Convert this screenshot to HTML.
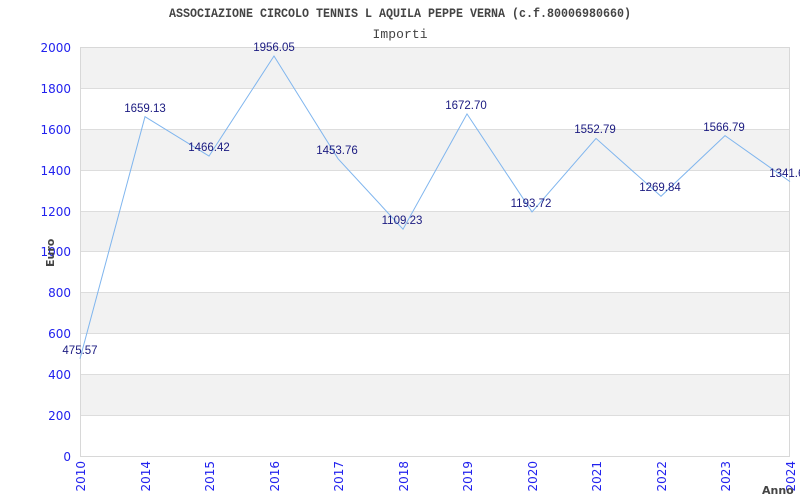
<!DOCTYPE html>
<html><head><meta charset="utf-8"><style>
html,body{margin:0;padding:0;background:#fff;width:800px;height:500px;overflow:hidden}
svg{display:block}
</style></head><body>
<svg width="800" height="500" xmlns="http://www.w3.org/2000/svg">
<rect x="0" y="0" width="800" height="500" fill="#fff"/>
<g fill="#f2f2f2">
<rect x="80" y="47" width="710" height="41"/>
<rect x="80" y="129" width="710" height="41"/>
<rect x="80" y="211" width="710" height="41"/>
<rect x="80" y="292" width="710" height="41"/>
<rect x="80" y="374" width="710" height="41"/>
</g>
<g stroke="#dddddd" stroke-width="1">
<line x1="80" y1="88.5" x2="790" y2="88.5"/>
<line x1="80" y1="129.5" x2="790" y2="129.5"/>
<line x1="80" y1="170.5" x2="790" y2="170.5"/>
<line x1="80" y1="211.5" x2="790" y2="211.5"/>
<line x1="80" y1="251.5" x2="790" y2="251.5"/>
<line x1="80" y1="292.5" x2="790" y2="292.5"/>
<line x1="80" y1="333.5" x2="790" y2="333.5"/>
<line x1="80" y1="374.5" x2="790" y2="374.5"/>
<line x1="80" y1="415.5" x2="790" y2="415.5"/>
</g>
<rect x="80.5" y="47.5" width="709" height="409" fill="none" stroke="#d8d8d8"/>
<polyline fill="none" stroke="#7fb5ee" stroke-width="1" points="80,358.7 145,116.7 209,156.1 274,56 338,158.7 403,229.2 467,113.9 532,211.9 596,138.4 661,196.3 725,135.6 790,181.6"/>
<g font-family="Liberation Mono, monospace" fill="#444">
<text x="400" y="17" text-anchor="middle" font-size="13" font-weight="bold" textLength="462" lengthAdjust="spacingAndGlyphs">ASSOCIAZIONE CIRCOLO TENNIS L AQUILA PEPPE VERNA (c.f.80006980660)</text>
<text x="400" y="38" text-anchor="middle" font-size="13" textLength="55">Importi</text>
</g>
<g font-family="DejaVu Sans, sans-serif" font-size="12" fill="#2222ee" text-anchor="end">
<text x="71" y="52">2000</text>
<text x="71" y="93">1800</text>
<text x="71" y="134">1600</text>
<text x="71" y="175">1400</text>
<text x="71" y="216">1200</text>
<text x="71" y="256">1000</text>
<text x="71" y="297">800</text>
<text x="71" y="338">600</text>
<text x="71" y="379">400</text>
<text x="71" y="420">200</text>
<text x="71" y="461">0</text>
</g>
<g font-family="DejaVu Sans, sans-serif" font-size="12" fill="#2222ee" text-anchor="end">
<text transform="translate(85,461) rotate(-90)">2010</text>
<text transform="translate(150,461) rotate(-90)">2014</text>
<text transform="translate(214,461) rotate(-90)">2015</text>
<text transform="translate(279,461) rotate(-90)">2016</text>
<text transform="translate(343,461) rotate(-90)">2017</text>
<text transform="translate(408,461) rotate(-90)">2018</text>
<text transform="translate(472,461) rotate(-90)">2019</text>
<text transform="translate(537,461) rotate(-90)">2020</text>
<text transform="translate(601,461) rotate(-90)">2021</text>
<text transform="translate(666,461) rotate(-90)">2022</text>
<text transform="translate(730,461) rotate(-90)">2023</text>
<text transform="translate(795,461) rotate(-90)">2024</text>
</g>
<g font-family="DejaVu Sans, sans-serif" fill="#444" font-weight="bold">
<text x="762" y="494" font-size="11">Anno</text>
<text transform="translate(54,267) rotate(-90)" font-size="11">Euro</text>
</g>
<g font-family="Liberation Sans, Arial, sans-serif" font-size="11.5" fill="#1a1a80" text-anchor="middle">
<text x="80" y="354">475.57</text>
<text x="145" y="112">1659.13</text>
<text x="209" y="151">1466.42</text>
<text x="274" y="51">1956.05</text>
<text x="337" y="154">1453.76</text>
<text x="402" y="224">1109.23</text>
<text x="466" y="109">1672.70</text>
<text x="531" y="207">1193.72</text>
<text x="595" y="133">1552.79</text>
<text x="660" y="191">1269.84</text>
<text x="724" y="131">1566.79</text>
<text x="790" y="177">1341.60</text>
</g>
</svg>
</body></html>
